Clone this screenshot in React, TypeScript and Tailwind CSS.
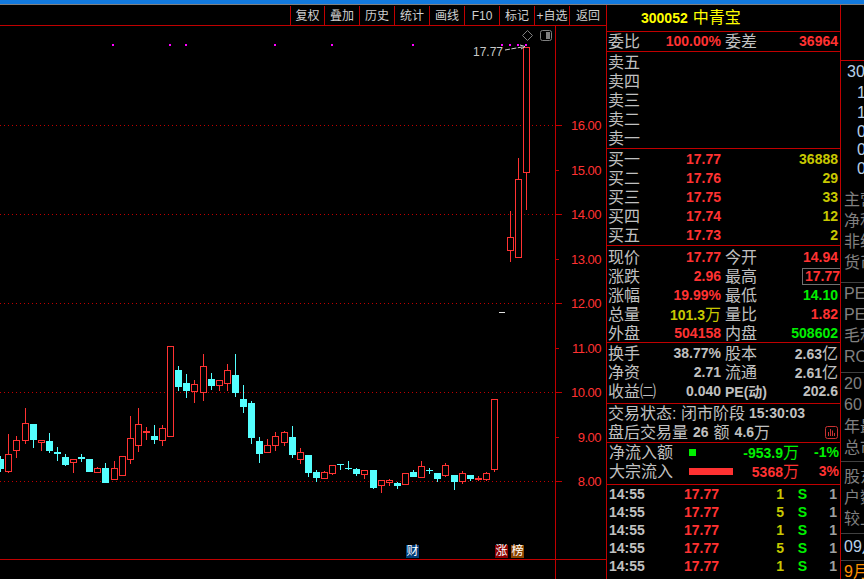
import React from "react";

const CJK = "font-['Liberation_Sans','Noto_Sans_CJK_SC',sans-serif]";
const RED = "text-[#ff3232]";
const GREEN = "text-[#00f000]";
const YEL = "text-[#c8c800]";
const GRAY = "text-[#c0c0c0]";

// [isRed, bodyTop, bodyBottom, wickTop, wickBottom] in zoomed units
const A: [number, number, number, number, number][] = [
  [0, 357, 387, 348, 396], [1, 343, 395, 282, 398], [1, 301, 332, 288, 354], [1, 250, 302, 204, 312],
  [0, 252, 300, 252, 324], [1, 301, 308, 301, 333], [0, 303, 333, 279, 339], [0, 336, 342, 321, 363],
  [0, 351, 375, 342, 378], [1, 358, 368, 358, 399], [0, 351, 357, 342, 366], [0, 357, 396, 357, 396],
  [1, 385, 398, 382, 398], [0, 384, 429, 369, 429], [1, 385, 420, 363, 420], [1, 349, 407, 349, 407],
  [1, 295, 359, 228, 372], [1, 253, 317, 204, 336], [1, 273, 279, 261, 300], [0, 288, 300, 255, 312],
  [1, 265, 302, 255, 318], [1, 19, 290, 19, 290], [0, 90, 141, 78, 153], [0, 129, 153, 102, 174],
  [1, 133, 155, 120, 189], [1, 79, 158, 42, 183], [0, 117, 138, 99, 150], [1, 121, 137, 121, 153],
  [1, 91, 131, 72, 153], [0, 105, 159, 42, 171], [0, 177, 201, 135, 219], [0, 189, 294, 183, 312],
  [0, 303, 342, 291, 369],
];
const B: [number, number, number, number, number][] = [
  [1, 195, 219, 177, 219], [1, 168, 198, 156, 213], [1, 156, 189, 153, 198], [0, 171, 225, 138, 234],
  [1, 216, 240, 204, 252], [0, 225, 279, 225, 291], [0, 276, 294, 270, 306], [1, 276, 297, 273, 297],
  [1, 255, 282, 255, 285], [0, 252, 255, 252, 270], [0, 264, 267, 243, 270], [0, 267, 282, 264, 288],
  [1, 270, 285, 270, 297], [0, 270, 324, 270, 327], [1, 300, 318, 300, 339], [1, 300, 309, 297, 318],
  [0, 309, 318, 306, 327], [1, 279, 315, 279, 315], [0, 276, 291, 270, 291], [1, 258, 294, 243, 294],
  [0, 271, 274, 264, 282], [0, 279, 297, 279, 306], [1, 255, 288, 249, 291], [0, 285, 306, 285, 330],
  [1, 279, 306, 273, 312], [0, 285, 297, 285, 303], [1, 295, 298, 288, 303], [1, 279, 300, 276, 303],
  [1, 57, 270, 57, 276],
];
const candles: { i: number; red: boolean; t: number; b: number; wt: number; wb: number }[] = [];
A.forEach((c, i) =>
  candles.push({ i, red: !!c[0], t: 340 + c[1] / 3, b: 340 + c[2] / 3, wt: 340 + c[3] / 3, wb: 340 + c[4] / 3 })
);
B.forEach((c, k) =>
  candles.push({ i: 33 + k, red: !!c[0], t: 380 + c[1] / 3, b: 380 + c[2] / 3, wt: 380 + c[3] / 3, wb: 380 + c[4] / 3 })
);
candles.push({ i: 63, red: true, t: 236.5, b: 250.5, wt: 211, wb: 261.5 });
candles.push({ i: 64, red: true, t: 178.5, b: 257.5, wt: 158, wb: 257.5 });
candles.push({ i: 65, red: true, t: 46.5, b: 172.5, wt: 46.5, wb: 210 });

const cx = (i: number) => Math.round(0.24 + 8.094 * i) + 0.5;

function Chart() {
  return (
    <svg className="block" width={555} height={533} viewBox="0 26 555 533" shapeRendering="crispEdges">
      {[125, 214, 303, 392, 481].map((y) => (
        <line key={y} x1={0} x2={555} y1={y + 0.5} y2={y + 0.5} stroke="#c00000" strokeDasharray="1 3" />
      ))}
      {[113, 170, 186, 275, 332, 413, 502, 510, 518, 526].map((x) => (
        <rect key={x} x={x - 1} y={44} width={2} height={2} fill="#ff00ff" />
      ))}
      {candles.map((c) => {
        const x = cx(c.i);
        const col = c.red ? "#ff3232" : "#54ffff";
        const t = Math.round(c.t);
        const b = Math.round(c.b);
        return (
          <g key={c.i}>
            <line x1={x} x2={x} y1={Math.round(c.wt)} y2={t} stroke={col} />
            <line x1={x} x2={x} y1={b} y2={Math.round(c.wb)} stroke={col} />
            {c.red ? (
              <rect x={x - 3} y={t + 0.5} width={6} height={Math.max(b - t - 1, 1)} fill="#000" stroke={col} />
            ) : (
              <rect x={x - 3.5} y={t} width={7} height={Math.max(b - t, 1)} fill={col} />
            )}
          </g>
        );
      })}
      <rect x={499} y={312} width={6} height={1} fill="#e0e0e0" />
      <g shapeRendering="auto">
        <path d="M527.5 30.5 L532.5 35.5 L527.5 40.5 L522.5 35.5 Z" fill="none" stroke="#808080" />
        <rect x={540.5} y={30.5} width={11} height={10} rx={2} fill="none" stroke="#808080" />
        <rect x={546} y={32} width={4} height={7} fill="#808080" />
        <path d="M505 50 L525 46.5" stroke="#d0d0d0" strokeDasharray="5 1.5" fill="none" />
        <path d="M520 45 L525 46.5 L521 49" stroke="#d0d0d0" fill="none" />
      </g>
    </svg>
  );
}

function AxisLabel({ y, major, label }: { y: number; major: boolean; label: string }) {
  return (
    <div
      className="absolute left-0 right-0 h-[17px] flex items-center justify-between pr-[5px]"
      style={{ top: y - 26 - 8 }}
    >
      <div className={major ? "w-[6px] h-px bg-[#c00000]" : "w-[3px] h-px bg-[#c00000]"} />
      <span className={`text-[13px] leading-none tracking-[-0.5px] ${RED}`}>{label}</span>
    </div>
  );
}

const Zh = ({ c }: { c: string }) => <span className="font-normal text-[16px]">{c}</span>;

function Row({
  l,
  v,
  vc = RED,
  l2,
  v2,
  v2c = RED,
}: {
  l: React.ReactNode;
  v?: React.ReactNode;
  vc?: string;
  l2?: React.ReactNode;
  v2?: React.ReactNode;
  v2c?: string;
}) {
  return (
    <div className="flex h-[19px] items-center pl-px whitespace-nowrap">
      <div className="w-[114px] flex justify-between items-center pr-px">
        <span className={`text-[16px] ${GRAY}`}>{l}</span>
        <span className={`text-[14px] font-bold ${vc}`}>{v}</span>
      </div>
      <div className="w-[113px] ml-[3px] flex justify-between items-center">
        <span className={`text-[16px] ${GRAY}`}>{l2}</span>
        <span className={`text-[14px] font-bold ${v2c}`}>{v2}</span>
      </div>
    </div>
  );
}

function Tick({ vol, vc }: { vol: string; vc: string }) {
  return (
    <div className="flex h-[18px] items-center pl-[2px] text-[14px] font-bold whitespace-nowrap">
      <span className={`w-[40px] ${GRAY}`}>14:55</span>
      <span className={`w-[70px] text-right ${RED}`}>17.77</span>
      <span className={`w-[65px] text-right ${vc}`}>{vol}</span>
      <span className={`w-[37px] text-center ${GREEN}`}>S</span>
      <span className="w-[16px] text-right text-[#a0a0a0]">1</span>
    </div>
  );
}

const SIDE: [string, string][] = [
  ["h-[22px] pl-[6px] text-[#b8d0e8]", "300"],
  ["h-[20px] pl-[16px] text-[#b8d0e8]", "1"],
  ["h-[19px] pl-[16px] text-[#b8d0e8]", "1"],
  ["h-[19px] pl-[16px] text-[#b8d0e8]", "0"],
  ["h-[18px] pl-[16px] text-[#b8d0e8]", "0"],
  ["h-[19px] pl-[16px] text-[#b8d0e8]", "0"],
  ["h-[12px]", ""],
  ["h-[20px] pl-[3px] text-[#808080]", "主营"],
  ["h-[21px] pl-[3px] text-[#808080]", "净利"],
  ["h-[21px] pl-[3px] text-[#808080]", "非经"],
  ["h-[21px] pl-[3px] text-[#808080]", "货币"],
  ["h-[10px] border-b border-[#404040]", ""],
  ["h-[21px] pl-[3px] text-[#808080]", "PE"],
  ["h-[21px] pl-[3px] text-[#808080]", "PEG"],
  ["h-[21px] pl-[3px] text-[#808080]", "毛利"],
  ["h-[21px] pl-[3px] text-[#808080]", "ROE"],
  ["h-[6px] border-b border-[#404040]", ""],
  ["h-[21px] pl-[3px] text-[#808080]", "20日"],
  ["h-[22px] pl-[3px] text-[#808080]", "60日"],
  ["h-[21px] pl-[3px] text-[#808080]", "年最"],
  ["h-[22px] pl-[3px] text-[#808080]", "总市"],
  ["h-[3px] border-b border-[#404040]", ""],
  ["h-[21px] pl-[3px] mt-[4px] text-[#808080]", "股东"],
  ["h-[21px] pl-[3px] text-[#808080]", "户数"],
  ["h-[22px] pl-[3px] text-[#808080]", "较上"],
  ["h-[4px] border-b border-[#404040]", ""],
  ["h-[26px] pl-[3px] text-[#b8d0e8]", "09月"],
  ["h-[1px] border-b border-[#404040]", ""],
  ["h-[21px] pl-[3px] text-[#ff9000]", "9月"],
];

export default function App() {
  return (
    <div className={`w-[864px] h-[579px] bg-black overflow-hidden flex flex-col ${CJK}`}>
      <div className="h-[4px] bg-[#1279dd] shrink-0" />
      <div className="h-px bg-[#808080] shrink-0" />
      <div className="flex flex-1 min-h-0">
        {/* left */}
        <div className="w-[607px] shrink-0 border-r border-[#c00000] flex flex-col">
          <div className="h-[21px] shrink-0 border-b border-[#c00000] flex justify-end pt-px">
            {[
              ["复权", "w-[34px]"],
              ["叠加", "w-[35px]"],
              ["历史", "w-[35px]"],
              ["统计", "w-[35px]"],
              ["画线", "w-[35px]"],
              ["F10", "w-[35px]"],
              ["标记", "w-[35px]"],
              ["+自选", "w-[35px]"],
              ["返回", "w-[37px]"],
            ].map(([t, w]) => (
              <div
                key={t}
                className={`${w} border-l border-[#c00000] flex items-center justify-center text-[12px] text-[#d0d0d0] whitespace-nowrap`}
              >
                {t}
              </div>
            ))}
          </div>
          <div className="relative flex h-[533px] shrink-0 border-b-0">
            <div className="w-[555px]">
              <Chart />
            </div>
            <div className="relative flex-1 border-l border-[#c00000]">
              {[
                [125, "16.00"],
                [170, "15.00"],
                [214, "14.00"],
                [259, "13.00"],
                [303, "12.00"],
                [348, "11.00"],
                [392, "10.00"],
                [437, "9.00"],
                [481, "8.00"],
              ].map(([y, t], i) => (
                <AxisLabel key={t as string} y={y as number} major={i % 2 === 0} label={t as string} />
              ))}
            </div>
            <div className="absolute left-[473px] top-[19px] text-[12px] leading-[14px] text-[#c8c8c8]">17.77</div>
            <div className="absolute left-[406px] top-[519px] w-[13px] h-[13px] bg-[#003c78] text-white text-[12px] leading-[13px] text-center">
              财
            </div>
            <div className="absolute left-[495px] top-[519px] w-[13px] h-[13px] bg-[#8b0000] text-white text-[12px] leading-[13px] text-center">
              涨
            </div>
            <div className="absolute left-[511px] top-[519px] w-[13px] h-[13px] bg-[#8b4500] text-white text-[12px] leading-[13px] text-center">
              榜
            </div>
          </div>
          <div className="flex-1 border-t border-[#c00000]">
            <div className="w-[556px] h-full border-r border-[#c00000]" />
          </div>
        </div>

        {/* quote panel */}
        <div className="w-[234px] shrink-0 border-r border-[#c00000] flex flex-col">
          <div className="h-[27px] shrink-0 border-b border-[#c00000] flex items-center pl-[34px] text-[#ffff00] gap-[5px] whitespace-nowrap">
            <span className="text-[14px] font-bold">300052</span>
            <span className="text-[16px]">中青宝</span>
          </div>
          <div className="h-[20px] shrink-0 border-b border-[#c00000]">
            <Row l="委比" v="100.00%" l2="委差" v2="36964" />
          </div>
          <div className="h-[97px] shrink-0 border-b border-[#c00000] pt-px">
            {["卖五", "卖四", "卖三", "卖二", "卖一"].map((t) => (
              <Row key={t} l={t} />
            ))}
          </div>
          <div className="h-[97px] shrink-0 border-b border-[#c00000] pt-px">
            <Row l="买一" v="17.77" v2="36888" v2c={YEL} />
            <Row l="买二" v="17.76" v2="29" v2c={YEL} />
            <Row l="买三" v="17.75" v2="33" v2c={YEL} />
            <Row l="买四" v="17.74" v2="12" v2c={YEL} />
            <Row l="买五" v="17.73" v2="2" v2c={YEL} />
          </div>
          <div className="h-[97px] shrink-0 border-b border-[#c00000] pt-[2px]">
            <Row l="现价" v="17.77" l2="今开" v2="14.94" />
            <Row
              l="涨跌"
              v="2.96"
              l2="最高"
              v2={
                <span className="inline-block w-[38px] h-[17px] leading-[15px] border border-r-0 border-[#707070] pl-[2px] -mr-[2px]">
                  17.77
                </span>
              }
            />
            <Row l="涨幅" v="19.99%" l2="最低" v2="14.10" v2c={GREEN} />
            <Row
              l="总量"
              v={
                <>
                  101.3
                  <Zh c="万" />
                </>
              }
              vc={YEL}
              l2="量比"
              v2="1.82"
            />
            <Row l="外盘" v="504158" l2="内盘" v2="508602" v2c={GREEN} />
          </div>
          <div className="h-[61px] shrink-0 border-b border-[#c00000] pt-px">
            <Row
              l="换手"
              v="38.77%"
              vc={GRAY}
              l2="股本"
              v2={
                <>
                  2.63
                  <Zh c="亿" />
                </>
              }
              v2c={GRAY}
            />
            <Row
              l="净资"
              v="2.71"
              vc={GRAY}
              l2="流通"
              v2={
                <>
                  2.61
                  <Zh c="亿" />
                </>
              }
              v2c={GRAY}
            />
            <Row
              l="收益㈡"
              v="0.040"
              vc={GRAY}
              l2={<span className="text-[14px] font-bold">PE(动)</span>}
              v2="202.6"
              v2c={GRAY}
            />
          </div>
          <div className={`h-[39px] shrink-0 border-b border-[#c00000] pl-px pr-[2px] ${GRAY} whitespace-nowrap`}>
            <div className="h-[19px] flex items-center text-[16px]">
              <span>交易状态: 闭市阶段</span>
              <span className="text-[14px] font-bold ml-[4px]">15:30:03</span>
            </div>
            <div className="h-[19px] flex items-center text-[16px]">
              <span>盘后交易量</span>
              <span className="text-[14px] font-bold ml-[5px]">26</span>
              <span className="ml-[5px]">额</span>
              <span className="text-[14px] font-bold ml-[5px]">4.6</span>
              <span>万</span>
              <svg className="ml-auto" width={13} height={13} viewBox="0 0 13 13">
                <rect x={0.5} y={0.5} width={12} height={12} rx={2} fill="none" stroke="#c83232" />
                <path d="M3.5 10V6M5.5 10V3M7.5 10V4.5M9.5 10V7" stroke="#c83232" fill="none" />
              </svg>
            </div>
          </div>
          <div className="h-[42px] shrink-0 border-b border-[#c00000] whitespace-nowrap">
            <div className="relative flex h-[19px] items-center pl-[2px]">
              <span className={`w-[80px] text-[16px] ${GRAY}`}>净流入额</span>
              <span className="w-[7px] h-[7px] bg-[#00f000]" />
              <span className={`ml-auto text-[14px] font-bold ${GREEN} pr-[41px]`}>
                -953.9
                <Zh c="万" />
              </span>
              <span className={`absolute right-px text-[14px] font-bold ${GREEN}`}>-1%</span>
            </div>
            <div className="relative flex h-[19px] items-center pl-[2px]">
              <span className={`w-[80px] text-[16px] ${GRAY}`}>大宗流入</span>
              <span className="w-[44px] h-[7px] bg-[#ff3232]" />
              <span className={`ml-auto text-[14px] font-bold ${RED} pr-[41px]`}>
                5368
                <Zh c="万" />
              </span>
              <span className={`absolute right-px text-[14px] font-bold ${RED}`}>3%</span>
            </div>
          </div>
          <div className="flex-1">
            <Tick vol="1" vc={YEL} />
            <Tick vol="5" vc={YEL} />
            <Tick vol="1" vc={YEL} />
            <Tick vol="5" vc={YEL} />
            <Tick vol="1" vc={YEL} />
          </div>
        </div>

        {/* clipped side column */}
        <div className="flex-1 min-w-0 overflow-hidden flex flex-col">
          <div className="h-[56px] shrink-0 border-b border-[#c00000]" />
          {SIDE.map(([c, t], i) => (
            <div key={i} className={`${c} shrink-0 flex items-center text-[16px] whitespace-nowrap`}>
              {t}
            </div>
          ))}
        </div>
      </div>
    </div>
  );
}
